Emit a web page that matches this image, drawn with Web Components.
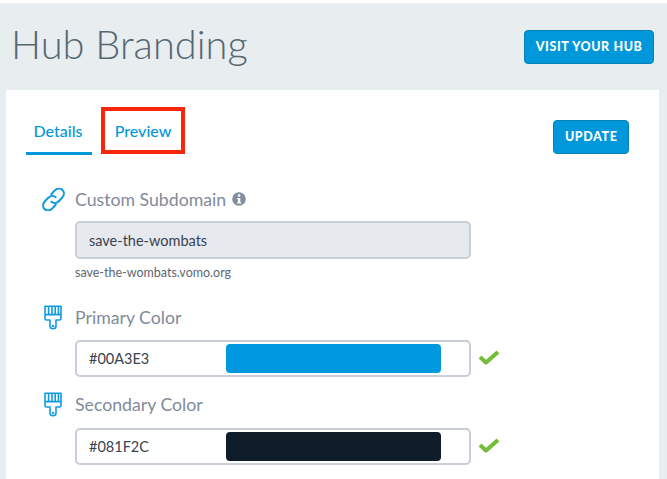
<!DOCTYPE html>
<html>
<head>
<meta charset="utf-8">
<style>
  html, body { margin: 0; height: 100%; overflow: hidden; background: #fff; }
  body { padding-top: 3px; box-sizing: border-box; font-family: Lato, "Liberation Sans", sans-serif; }
</style>
</head>
<body>
<hub-page></hub-page>
<script>
const ICONS = {
  link: `<svg width="23" height="23" viewBox="2.500 2.500 19 19" fill="none" stroke="#0f9be0" stroke-width="1.700" stroke-linecap="round"><path d="M10.200 7.600l2.900-3.100c1.900-2 4.700-2 6.300-.4s1.600 4.400-.3 6.400l-2.800 2.900c-1.800 1.800-4.400 2-6 .5"/><path d="M13.800 16.400l-2.900 3.100c-1.900 2-4.700 2-6.300.4s-1.600-4.400.3-6.400l2.800-2.900c1.800-1.800 4.400-2 6-.5"/></svg>`,
  brush: `<svg width="20" height="25" viewBox="0 0 20 25" fill="none" stroke="#0f9be0" stroke-width="1.600" stroke-linejoin="round"><path d="M2 1.200h16v12.200c0 1-.6 1.600-1.600 1.600H13v6c0 1.600-1.300 2.800-3 2.800s-3-1.200-3-2.800v-6H3.600C2.600 15 2 14.400 2 13.400z"/><path d="M2 9.600h16M5.600 1.500v8M9 1.500v8M12.200 1.500v8M15.400 1.500v8"/><circle cx="10" cy="21" r=".5"/></svg>`,
  check: `<svg width="22" height="16" viewBox="0 0 22 16"><path d="M2 8l6 5.500L20 3" fill="none" stroke="#76bb3c" stroke-width="4.200" stroke-linejoin="round"/></svg>`,
  info: `<svg width="14" height="14" viewBox="0 0 14 14"><circle cx="7" cy="7" r="6.800" fill="#828e9c"/><rect x="5.800" y="2.400" width="2.500" height="2.200" fill="#fff"/><path d="M5 6h3.300v4.200h1v1.300H5v-1.300h1V7.300H5z" fill="#fff"/></svg>`
};

class HubButton extends HTMLElement {
  constructor() {
    super();
    this.attachShadow({ mode: 'open' }).innerHTML = `
    <style>
      :host { display: inline-flex; }
      button {
        height: 34px;
        padding: 0 10.500px 2px;
        box-sizing: border-box;
        background: #0098da;
        border: 1px solid #0480b8;
        border-radius: 4px;
        color: #fff;
        font: 900 12.500px Lato, "Liberation Sans", sans-serif;
        letter-spacing: .6px;
        white-space: nowrap;
      }
    </style>
    <button><slot></slot></button>`;
  }
}
customElements.define('hub-button', HubButton);

class HubField extends HTMLElement {
  constructor() {
    super();
    const icon = this.getAttribute('icon');
    this.attachShadow({ mode: 'open' }).innerHTML = `
    <style>
      :host { display: grid; grid-template-columns: 49px 396px auto; align-items: center; }
      .icon { display: flex; justify-content: center; width: 28px; margin-left: 13px; margin-right: 8px; }
      .label {
        display: flex; align-items: center; gap: 6px;
        grid-column: 2 / 4;
        height: 24px;
        color: #7f8b99;
        font-size: 17.700px;
      }
      .control { grid-column: 2; margin-top: var(--control-gap, 10px); }
      .after { grid-column: 3; margin-top: var(--control-gap, 10px); margin-left: 7px; display: flex; }
    </style>
    <div class="icon">${ICONS[icon]}</div>
    <div class="label"><slot name="label"></slot></div>
    <div class="control"><slot></slot></div>
    <div class="after"><slot name="after"></slot></div>`;
  }
}
customElements.define('hub-field', HubField);

class HubColorInput extends HTMLElement {
  constructor() {
    super();
    const value = this.getAttribute('value');
    const swatch = this.getAttribute('swatch');
    this.attachShadow({ mode: 'open' }).innerHTML = `
    <style>
      :host {
        display: flex; align-items: center;
        height: 37px; box-sizing: border-box;
        padding: 0 28px 0 12px;
        background: #fff;
        border: 2px solid #c9ced8;
        border-radius: 5px;
        color: #39424e;
        font-size: 14.500px;
      }
      span { width: 137px; }
      i { flex: 1; height: 29px; border-radius: 4px; background: ${swatch}; }
    </style>
    <span>${value}</span><i></i>`;
  }
}
customElements.define('hub-color-input', HubColorInput);

class HubTextInput extends HTMLElement {
  constructor() {
    super();
    this.attachShadow({ mode: 'open' }).innerHTML = `
    <style>
      :host {
        display: flex; align-items: center;
        height: 38px; box-sizing: border-box;
        padding: 0 12px;
        background: #e6e9ee;
        border: 2px solid #c9ced8;
        border-radius: 5px;
        color: #39424e;
        font-size: 14.500px;
      }
    </style>
    <slot></slot>`;
  }
}
customElements.define('hub-text-input', HubTextInput);

class HubTabs extends HTMLElement {
  constructor() {
    super();
    this.attachShadow({ mode: 'open' }).innerHTML = `
    <style>
      :host { display: flex; align-items: flex-start; gap: 9px; color: #0098da; font-size: 16px; font-weight: 500; }
      div { box-sizing: border-box; white-space: nowrap; }
      .details { width: 66px; height: 48px; padding: 14px 2px 0 0; text-align: center; border-bottom: 3px solid #0098da; }
      .preview { width: 84px; height: 47px; padding-top: 10px; text-align: center; border: 4px solid #f9260a; }
    </style>
    <div class="details">Details</div>
    <div class="preview">Preview</div>`;
  }
}
customElements.define('hub-tabs', HubTabs);

class HubPage extends HTMLElement {
  constructor() {
    super();
    this.attachShadow({ mode: 'open' }).innerHTML = `
    <style>
      :host { display: block; height: 476px; background: #e8edf0; padding: 0 8px 0 6px; box-sizing: border-box; font-family: Lato, "Liberation Sans", sans-serif; }
      header { display: flex; justify-content: space-between; height: 87px; padding: 0 5px 0 5px; }
      h1 { margin: 17px 0 0; color: #566873; font-size: 39.800px; font-weight: 300; line-height: 47px; }
      header hub-button { margin-top: 27px; }
      main { background: #fff; height: 389px; padding: 17px 30px 0 20px; box-sizing: border-box; overflow: hidden; }
      .top { display: flex; justify-content: space-between; }
      .top hub-button { margin-top: 13px; }
      .fields { margin-top: 32px; }
      .hint { color: #5c6672; font-size: 12.500px; margin: 6px 0 0 49px; height: 15px; line-height: 15px; }
      .gap1 { margin-top: 25px; }
      .gap2 { margin-top: 15px; --control-gap: 11px; }
    </style>
    <header>
      <h1>Hub Branding</h1>
      <hub-button>VISIT YOUR HUB</hub-button>
    </header>
    <main>
      <div class="top">
        <hub-tabs></hub-tabs>
        <hub-button>UPDATE</hub-button>
      </div>
      <div class="fields">
        <hub-field icon="link">
          <span slot="label">Custom Subdomain</span>
          <span slot="label" style="display:flex">${ICONS.info}</span>
          <hub-text-input>save-the-wombats</hub-text-input>
        </hub-field>
        <div class="hint">save-the-wombats.vomo.org</div>
        <hub-field class="gap1" icon="brush">
          <span slot="label">Primary Color</span>
          <hub-color-input value="#00A3E3" swatch="#0099e0"></hub-color-input>
          <span slot="after">${ICONS.check}</span>
        </hub-field>
        <hub-field class="gap2" icon="brush">
          <span slot="label">Secondary Color</span>
          <hub-color-input value="#081F2C" swatch="#0e1d29"></hub-color-input>
          <span slot="after">${ICONS.check}</span>
        </hub-field>
      </div>
    </main>`;
  }
}
customElements.define('hub-page', HubPage);
</script>
</body>
</html>
